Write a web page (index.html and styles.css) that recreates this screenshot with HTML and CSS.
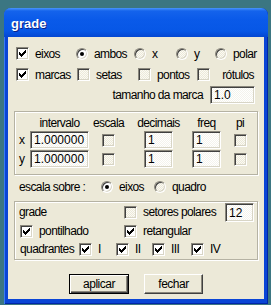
FILE: index.html
```html
<!DOCTYPE html>
<html lang="pt">
<head>
    <meta charset="UTF-8">
    <title>grade</title>
    <link rel="stylesheet" href="styles.css">
</head>
<body>
    <div class="window">
        <div class="titlebar">grade</div>

        <div class="dialog">
            <!-- eixos / ambos x y polar -->
            <div class="row row-axes">
                <div class="opt"><span class="cb on"><svg class="tick" viewBox="0 0 7 7"><path d="M6 0h1v1H6zM5 1h2v1H5zM0 2h1v1H0zM4 2h3v1H4zM0 3h2v1H0zM3 3h3v1H3zM0 4h5v1H0zM1 5h3v1H1zM2 6h1v1H2z"/></svg></span>eixos</div>
                <div class="opt"><span class="rb on"></span>ambos</div>
                <div class="opt"><span class="rb"></span>x</div>
                <div class="opt"><span class="rb"></span>y</div>
                <div class="opt"><span class="rb"></span>polar</div>
            </div>

            <div class="row row-marks">
                <div class="opt"><span class="cb on"><svg class="tick" viewBox="0 0 7 7"><path d="M6 0h1v1H6zM5 1h2v1H5zM0 2h1v1H0zM4 2h3v1H4zM0 3h2v1H0zM3 3h3v1H3zM0 4h5v1H0zM1 5h3v1H1zM2 6h1v1H2z"/></svg></span>marcas</div>
                <div class="opt"><span class="cb"></span>setas</div>
                <div class="opt"><span class="cb"></span>pontos</div>
                <div class="opt opt-right"><span class="cb"></span>rótulos</div>
            </div>

            <div class="row row-size">
                <span>tamanho da marca</span>
                <span class="field field-size">1.0</span>
            </div>

            <!-- intervalo / escala / decimais / freq / pi -->
            <div class="group group-table">
                <span></span>
                <span class="head">intervalo</span>
                <span class="head">escala</span>
                <span class="head">decimais</span>
                <span class="head">freq</span>
                <span class="head">pi</span>

                <span class="axis">x</span>
                <span class="field field-wide">1.000000</span>
                <span class="cb"></span>
                <span class="field field-small">1</span>
                <span class="field field-small">1</span>
                <span class="cb"></span>

                <span class="axis">y</span>
                <span class="field field-wide">1.000000</span>
                <span class="cb"></span>
                <span class="field field-small">1</span>
                <span class="field field-small">1</span>
                <span class="cb"></span>
            </div>

            <div class="row row-scale">
                <span>escala sobre :</span>
                <div class="opt"><span class="rb on"></span>eixos</div>
                <div class="opt"><span class="rb"></span>quadro</div>
            </div>

            <!-- grade -->
            <div class="group group-grid">
                <div class="row row-grid-a">
                    <span>grade</span>
                    <div class="opt"><span class="cb"></span>setores polares</div>
                    <span class="field field-sectors">12</span>
                </div>
                <div class="row row-grid-b">
                    <div class="opt"><span class="cb on"><svg class="tick" viewBox="0 0 7 7"><path d="M6 0h1v1H6zM5 1h2v1H5zM0 2h1v1H0zM4 2h3v1H4zM0 3h2v1H0zM3 3h3v1H3zM0 4h5v1H0zM1 5h3v1H1zM2 6h1v1H2z"/></svg></span>pontilhado</div>
                    <div class="opt"><span class="cb on"><svg class="tick" viewBox="0 0 7 7"><path d="M6 0h1v1H6zM5 1h2v1H5zM0 2h1v1H0zM4 2h3v1H4zM0 3h2v1H0zM3 3h3v1H3zM0 4h5v1H0zM1 5h3v1H1zM2 6h1v1H2z"/></svg></span>retangular</div>
                </div>
                <div class="row row-grid-c">
                    <span>quadrantes</span>
                    <div class="opt"><span class="cb on"><svg class="tick" viewBox="0 0 7 7"><path d="M6 0h1v1H6zM5 1h2v1H5zM0 2h1v1H0zM4 2h3v1H4zM0 3h2v1H0zM3 3h3v1H3zM0 4h5v1H0zM1 5h3v1H1zM2 6h1v1H2z"/></svg></span>I</div>
                    <div class="opt"><span class="cb on"><svg class="tick" viewBox="0 0 7 7"><path d="M6 0h1v1H6zM5 1h2v1H5zM0 2h1v1H0zM4 2h3v1H4zM0 3h2v1H0zM3 3h3v1H3zM0 4h5v1H0zM1 5h3v1H1zM2 6h1v1H2z"/></svg></span>II</div>
                    <div class="opt"><span class="cb on"><svg class="tick" viewBox="0 0 7 7"><path d="M6 0h1v1H6zM5 1h2v1H5zM0 2h1v1H0zM4 2h3v1H4zM0 3h2v1H0zM3 3h3v1H3zM0 4h5v1H0zM1 5h3v1H1zM2 6h1v1H2z"/></svg></span>III</div>
                    <div class="opt"><span class="cb on"><svg class="tick" viewBox="0 0 7 7"><path d="M6 0h1v1H6zM5 1h2v1H5zM0 2h1v1H0zM4 2h3v1H4zM0 3h2v1H0zM3 3h3v1H3zM0 4h5v1H0zM1 5h3v1H1zM2 6h1v1H2z"/></svg></span>IV</div>
                </div>
            </div>

            <div class="buttons">
                <button class="btn btn-default">aplicar</button>
                <button class="btn">fechar</button>
            </div>
        </div>
    </div>
</body>
</html>
```

FILE: styles.css
```css
body {
    margin: 0;
    background-color: #3b7682;
    font-family: "Liberation Sans", Arial, sans-serif;
    font-size: 12px;
    letter-spacing: -0.6px;
    color: #000;
}

/* window frame */
.window {
    width: 264px;
    height: 296px;
    margin: 8px 0 0 4px;
    display: flex;
    flex-direction: column;
    background-color: #0a45d6;
    border-radius: 7px 7px 0 0;
    box-shadow: inset 1px 0 #3a7cf2, inset -1px 0 #0025a8, inset 0 -1px #0025a8;
}

.titlebar {
    height: 26px;
    padding: 3px 0 0 7px;
    line-height: 26px;
    font-size: 13px;
    font-weight: bold;
    letter-spacing: 0;
    color: #fff;
    text-shadow: 1px 1px #0b2387;
    border-radius: 7px 7px 0 0;
    background: linear-gradient(#4a95fb, #1463ec 3px, #0a5ae9 40%, #0757e6 80%, #0447d2);
}

.dialog {
    flex: 1;
    margin: 0 4px 5px 4px;
    padding-top: 6px;
    background-color: #ece9d8;
}

/* rows */
.row {
    display: grid;
    align-items: center;
    white-space: nowrap;
}

.row-axes {
    height: 21px;
    padding-left: 8px;
    grid-template-columns: 60px 58px 42px 39px auto;
}

.row-marks {
    height: 21px;
    padding-left: 8px;
    grid-template-columns: 61px 61px 59px 57px;
}

.row-size {
    height: 19px;
    display: flex;
    justify-content: flex-end;
    gap: 7px;
    padding-right: 9px;
}

.row-scale {
    height: 19px;
    margin-top: 2px;
    padding-left: 11px;
    grid-template-columns: 82px 53px auto;
}

/* option = control + label */
.opt {
    display: flex;
    align-items: center;
    gap: 6px;
}

.opt-right {
    justify-content: space-between;
}

/* checkbox */
.cb {
    flex: none;
    width: 13px;
    height: 13px;
    box-sizing: border-box;
    display: flex;
    align-items: center;
    justify-content: center;
    border: 1px solid;
    border-color: #8a877c #fff #fff #8a877c;
    box-shadow: inset 1px 1px #404040, inset -1px -1px #d8d5c6;
    background: repeating-conic-gradient(#fbfaf5 0 25%, #ece9d8 0 50%) 0 0 / 2px 2px;
}

.cb.on {
    background: #fff;
}

.tick {
    width: 7px;
    height: 7px;
    shape-rendering: crispEdges;
}

/* radio */
.rb {
    flex: none;
    position: relative;
    width: 12px;
    height: 12px;
    box-sizing: border-box;
    border-radius: 50%;
    border: 1px solid;
    border-color: #8a877c #fff #fff #8a877c;
    box-shadow: inset 1px 1px #404040, inset -1px -1px #d8d5c6;
    background: repeating-conic-gradient(#fbfaf5 0 25%, #ece9d8 0 50%) 0 0 / 2px 2px;
}

.rb.on {
    background: #fff;
}

.rb.on::after {
    content: "";
    position: absolute;
    left: 3px;
    top: 3px;
    width: 4px;
    height: 4px;
    border-radius: 50%;
    background: #000;
}

/* text fields */
.field {
    box-sizing: border-box;
    height: 18px;
    padding: 1px 0 0 3px;
    font-size: 12px;
    letter-spacing: 0;
    line-height: 15px;
    border: 1px solid;
    border-color: #8a877c #fff #fff #8a877c;
    box-shadow: inset 1px 1px #404040, inset -1px -1px #d8d5c6;
    background: repeating-conic-gradient(#fff 0 25%, #f4f3ec 0 50%) 0 0 / 2px 2px;
}

.field-size {
    width: 45px;
}

.field-wide {
    width: 59px;
}

.field-small {
    width: 29px;
}

.field-sectors {
    width: 29px;
    height: 19px;
    padding-top: 2px;
}

/* group boxes */
.group {
    margin: 0 6px 0 6px;
    border: 1px solid #b5b2a3;
    box-shadow: 1px 1px #fff, inset 1px 1px #fff;
}

.group-table {
    margin-top: 7px;
    padding: 5px 0 6px 0;
    display: grid;
    grid-template-columns: 15px 59px 39px 61px 35px 32px;
    grid-template-rows: 13px 18px 18px;
    row-gap: 1px;
    align-items: center;
    justify-items: center;
}

.group-table .head {
    line-height: 13px;
}

.group-table .axis {
    justify-self: start;
    padding-left: 4px;
}

.group-grid {
    margin-top: 5px;
    padding-bottom: 1px;
}

.row-grid-a {
    height: 20px;
    padding: 0 3px 0 4px;
    grid-template-columns: 105px 1fr 29px;
}

.row-grid-b {
    height: 18px;
    padding-left: 5px;
    grid-template-columns: 104px auto;
}

.row-grid-c {
    height: 18px;
    padding-left: 5px;
    grid-template-columns: 59px 37px 36px 39px auto;
}

/* buttons */
.buttons {
    margin-top: 14px;
    display: flex;
    justify-content: center;
    gap: 15px;
}

.btn {
    box-sizing: border-box;
    height: 20px;
    width: 59px;
    padding: 0;
    font-family: inherit;
    font-size: 12px;
    letter-spacing: -0.5px;
    color: #000;
    background-color: #ece9d8;
    border: 1px solid;
    border-color: #fff #404040 #404040 #fff;
    box-shadow: inset -1px -1px #8a877c;
}

.btn-default {
    width: 60px;
    border: 1px solid #000;
    box-shadow: inset 1px 1px #fff, inset -1px -1px #404040, inset -2px -2px #8a877c;
}
```
